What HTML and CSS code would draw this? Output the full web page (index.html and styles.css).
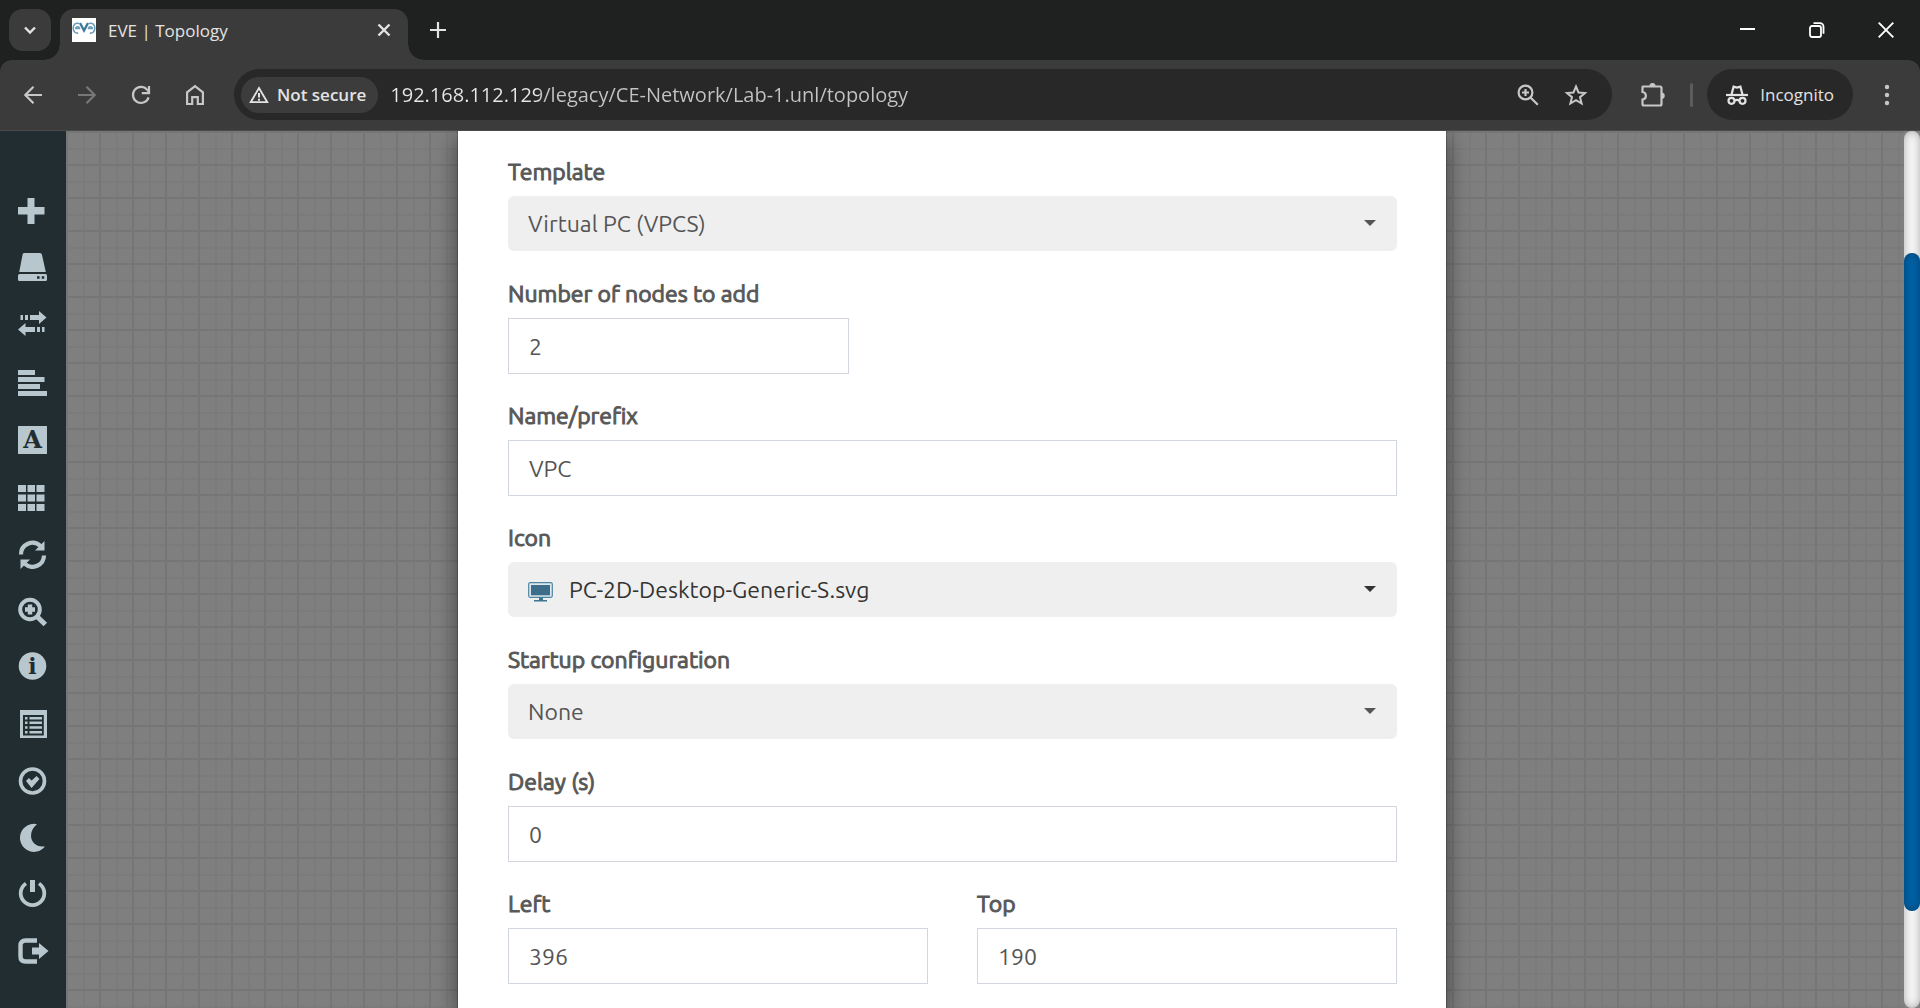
FILE: index.html
```html
<!DOCTYPE html>
<html lang="en">
<head>
<meta charset="utf-8">
<meta name="viewport" content="width=device-width, initial-scale=1">
<title>EVE | Topology</title>
<link rel="stylesheet" href="styles.css">
</head>
<body>
<div class="browser">
  <header class="tabstrip">
    <button class="tab-search" type="button" aria-label="Search tabs">
      <svg width="16" height="16" viewBox="0 0 16 16"><path d="M3 5.500l5 5 5-5" fill="none" stroke="currentColor" stroke-width="2.400"/></svg>
    </button>
    <div class="tab">
      <svg class="favicon" width="24" height="24" viewBox="0 0 24 24" aria-hidden="true">
        <rect width="24" height="24" fill="#fff"/>
        <g fill="none" stroke="#6a9db8">
          <path d="M7 5.500C3.500 4.500 1.200 6.500 1.200 10s2 5.500 5 5M3 10.500h4.500c0-2-3-2.500-4-.5" stroke-width="1.600"/>
          <path d="M17 5.500c3.500-1 5.800 1 5.800 4.500s-2 5.500-5 5M21 10.500h-4.500c0-2 3-2.500 4-.5" stroke-width="1.600"/>
          <path d="M8 5l4 7.500L16 5" stroke="#3f7a9c" stroke-width="2.400"/>
        </g>
      </svg>
      <span class="tab-title">EVE | Topology</span>
      <button class="bare tab-close" type="button" aria-label="Close tab">
        <svg width="14" height="14" viewBox="0 0 14 14"><path d="M1.500 1.500l11 11M12.500 1.500l-11 11" stroke="currentColor" stroke-width="2.400"/></svg>
      </button>
    </div>
    <button class="bare new-tab" type="button" aria-label="New tab">
      <svg width="16" height="16" viewBox="0 0 16 16"><path d="M8 0v16M0 8h16" stroke="currentColor" stroke-width="2.200"/></svg>
    </button>
    <div class="window-controls">
      <button class="bare" type="button" aria-label="Minimize"><svg width="16" height="16" viewBox="0 0 16 16"><path d="M0 7h15" stroke="#fff" stroke-width="2"/></svg></button>
      <button class="bare" type="button" aria-label="Restore"><svg width="16" height="16" viewBox="0 0 16 16"><g fill="none" stroke="#fff" stroke-width="1.800"><rect x="1" y="4" width="11" height="11" rx="2"/><path d="M4.500 1.200h6.500a3.500 3.500 0 0 1 3.500 3.500v7"/></g></svg></button>
      <button class="bare" type="button" aria-label="Close"><svg width="16" height="16" viewBox="0 0 16 16"><path d="M.7.700l14.600 14.600M15.300.7L.7 15.300" stroke="#fff" stroke-width="1.900"/></svg></button>
    </div>
  </header>

  <nav class="toolbar" aria-label="Browser toolbar">
    <div class="nav-buttons">
      <button class="bare" type="button" aria-label="Back"><svg width="20" height="20" viewBox="0 0 20 20"><path d="M19 10H3M10.500 1.800L2.300 10l8.200 8.200" fill="none" stroke="currentColor" stroke-width="2.200"/></svg></button>
      <button class="bare dim" type="button" aria-label="Forward" disabled><svg width="20" height="20" viewBox="0 0 20 20"><path d="M1 10h16M9.500 1.800l8.200 8.200-8.200 8.200" fill="none" stroke="currentColor" stroke-width="2.200"/></svg></button>
      <button class="bare" type="button" aria-label="Reload"><svg width="20" height="20" viewBox="0 0 20 20"><path d="M17.600 12.300A8 8 0 1 1 16 4.600L18 6.800" fill="none" stroke="currentColor" stroke-width="2.200"/><path d="M18 1v7.200h-7.200" fill="none" stroke="currentColor" stroke-width="2.200"/></svg></button>
      <button class="bare" type="button" aria-label="Home"><svg width="20" height="22" viewBox="0 0 20 22"><path d="M2.100 20V8.300L10 2.200l7.900 6.100V20h-5.100v-6.800H7.200V20z" fill="none" stroke="currentColor" stroke-width="2.200"/></svg></button>
    </div>
    <div class="omnibox">
      <button class="site-chip" type="button">
        <svg width="20" height="18" viewBox="0 0 20 18"><path d="M10 2L1.700 16.200h16.600z" fill="none" stroke="currentColor" stroke-width="1.800"/><path d="M10 7v4.500M10 12.800v2" stroke="currentColor" stroke-width="2"/></svg>
        <span>Not secure</span>
      </button>
      <input class="address" type="text" aria-label="Address" value="192.168.112.129/legacy/CE-Network/Lab-1.unl/topology" spellcheck="false">
      <button class="bare" type="button" aria-label="Zoom"><svg width="22" height="22" viewBox="0 0 22 22"><g fill="none" stroke="currentColor" stroke-width="2.200"><circle cx="8.500" cy="8.500" r="6.900"/><path d="M13.500 13.500l7.300 7.300M8.500 5v7M5 8.500h7"/></g></svg></button>
      <button class="bare" type="button" aria-label="Bookmark this tab"><svg width="24" height="24" viewBox="0 0 24 24"><path d="M12 3.500l2.500 6 6.500.5-5 4.200 1.600 6.300L12 17.100l-5.600 3.400L8 14.200 3 10l6.500-.5z" fill="none" stroke="currentColor" stroke-width="2"/></svg></button>
    </div>
    <button class="bare extensions" type="button" aria-label="Extensions"><svg width="26" height="26" viewBox="0 0 26 26"><path d="M3 4.500h17a1.500 1.500 0 0 1 1.500 1.500v16a1.500 1.500 0 0 1-1.500 1.500H4A1.500 1.500 0 0 1 2.500 22v-4.500c4.500-.5 4.500-7 0-7.500V5z" fill="none" stroke="currentColor" stroke-width="2.200"/><path d="M9.500 4a3 3 0 0 1 6 0zM22 10.500a3.300 3.300 0 0 1 0 6.500z" fill="currentColor"/></svg></button>
    <span class="divider"></span>
    <button class="incognito" type="button">
      <svg width="22" height="20" viewBox="0 0 22 20"><g fill="none" stroke="currentColor" stroke-width="2.200"><path d="M0 10h22"/><path d="M5.500 9.500L7.600 1.600 11 2.500l3.400-.9 2.100 7.900"/><circle cx="5.500" cy="15.800" r="3"/><circle cx="16.500" cy="15.800" r="3"/><path d="M8.500 15.500q2.500-1.300 5 0"/></g></svg>
      <span>Incognito</span>
    </button>
    <button class="bare menu" type="button" aria-label="Menu"><svg width="6" height="22" viewBox="0 0 6 22" fill="currentColor"><circle cx="3" cy="3" r="2.200"/><circle cx="3" cy="11" r="2.200"/><circle cx="3" cy="19" r="2.200"/></svg></button>
  </nav>

  <main class="page">
    <aside class="sidebar">
      <button class="bare" type="button" aria-label="Add an object"><svg viewBox="0 0 32 32"><path d="M10.500 3h7v9H27.500v7.500h-10V29h-7v-9.500H1V12h9.500z"/></svg></button>
      <button class="bare" type="button" aria-label="Nodes"><svg viewBox="0 0 32 32"><path d="M7 1h16q1.500 0 1.900 1.500L28.800 20H2.200L5.600 2.500Q5.900 1 7 1zM2.500 22h26q1.500 0 1.500 1.500v4q0 1.500-1.500 1.500h-26Q1 29 1 27.500v-4Q1 22 2.500 22zm17.500 2.200v2.600h2.600v-2.600zm4.700 0v2.600h2.600v-2.600z" fill-rule="evenodd"/></svg></button>
      <button class="bare" type="button" aria-label="Networks"><svg viewBox="0 0 32 32"><path d="M22 2l7.500 6.500L22 15v-4h-9V6h9zM8 6h3v5H8zM3.500 6H6v5H3.500zM8.500 14v4H18v5H8.500v4L1 20.500zM20 18h3v5h-3zM25 18h2.500v5H25z"/></svg></button>
      <button class="bare" type="button" aria-label="Startup configs"><svg viewBox="0 0 32 32"><path d="M1 4h17v5H1zM1 11h26.500v5H1zM1 18h22v5H1zM1 25h29v5H1z"/></svg></button>
      <button class="bare" type="button" aria-label="Text objects"><svg viewBox="0 0 32 32"><path d="M1 3h29v28H1z"/><text class="glyph" x="15.500" y="25" text-anchor="middle" font-size="24" font-weight="bold">A</text></svg></button>
      <button class="bare" type="button" aria-label="Configured objects"><svg viewBox="0 0 32 32"><path d="M1 5h8v7H1zM10.500 5H18v7h-7.500zM19.500 5h8v7h-8zM1 14.500h8v7H1zM10.500 14.500H18v7h-7.500zM19.500 14.500h8v7h-8zM1 24h8v7H1zM10.500 24H18v7h-7.500zM19.500 24h8v7h-8z"/></svg></button>
      <button class="bare" type="button" aria-label="Refresh topology"><svg viewBox="0 0 32 32"><g fill="none" stroke="currentColor" stroke-width="4.200"><path d="M4 17.500A11.500 11.500 0 0 1 23.500 9"/><path d="M27 18.500A11.500 11.500 0 0 1 8 27"/></g><path d="M27.500 4v9.500H18zM3.500 32v-9.500H13z"/></svg></button>
      <button class="bare" type="button" aria-label="Zoom"><svg viewBox="0 0 32 32"><g fill="none" stroke="currentColor"><circle cx="13" cy="15.500" r="9.800" stroke-width="4"/><path d="M20 22.500l8.300 8" stroke-width="5"/><path d="M13 10.500v10M8 15.500h10" stroke-width="4.400"/></g></svg></button>
      <button class="bare" type="button" aria-label="Status"><svg viewBox="0 0 32 32"><circle cx="15.500" cy="15" r="13.800"/><text class="glyph" x="15.500" y="23" text-anchor="middle" font-size="22" font-weight="bold">i</text></svg></button>
      <button class="bare" type="button" aria-label="Lab details"><svg viewBox="0 0 32 32"><path d="M3 2h27v28H3zm3 5v20.500h20.800V7z" fill-rule="evenodd"/><path d="M8 9h2.500v2.500H8zM12.500 9H25v2.500H12.500zM8 13.500h2.500V16H8zM12.500 13.500H25V16H12.500zM8 18.300h2.500v2.500H8zM12.500 18.300H25v2.500H12.500zM8 23h2.500v2.500H8zM12.500 23H25v2.500H12.500z"/></svg></button>
      <button class="bare" type="button" aria-label="Lock lab"><svg viewBox="0 0 32 32"><circle cx="15.500" cy="16" r="12" fill="none" stroke="currentColor" stroke-width="3.600"/><path d="M9 16l2.900-3 2.700 2.500 5-4.500 2.900 3-7.900 9z"/></svg></button>
      <button class="bare" type="button" aria-label="Dark mode"><svg viewBox="0 0 32 32"><path d="M20 2.200A14 14 0 1 0 28 24.500C12.500 26 10 9.500 20 2.200z"/></svg></button>
      <button class="bare" type="button" aria-label="Close lab"><svg viewBox="0 0 32 32"><path d="M9 4.500a11.800 11.800 0 1 0 13 0" fill="none" stroke="currentColor" stroke-width="3.800"/><path d="M13 1h5v12h-5z"/></svg></button>
      <button class="bare" type="button" aria-label="Logout"><svg viewBox="0 0 32 32"><path d="M20 4.500H8.500q-5 0-5 5v11q0 5 5 5H20" fill="none" stroke="currentColor" stroke-width="4.400"/><path d="M15 11.500h7V7l9.500 8-9.500 8v-4.500h-7z"/></svg></button>
    </aside>
    <div class="canvas"></div>
    <div class="scroll-track"><div class="scroll-thumb"></div></div>

    <div class="overlay">
      <form class="modal" aria-label="Add a new node">
        <div class="field">
          <label for="template">Template</label>
          <div class="select"><select id="template"><option>Virtual PC (VPCS)</option></select></div>
        </div>
        <div class="field count">
          <label for="count">Number of nodes to add</label>
          <input id="count" type="text" value="2">
        </div>
        <div class="field">
          <label for="name">Name/prefix</label>
          <input id="name" type="text" value="VPC">
        </div>
        <div class="field">
          <label for="icon">Icon</label>
          <div class="select with-icon">
            <svg class="device" width="25" height="20" viewBox="0 0 25 20" aria-hidden="true"><rect x=".7" y=".7" width="23.600" height="14.600" rx="1.500" fill="#dfe8ec" stroke="#4d86a1" stroke-width="1.200"/><rect x="3" y="3" width="19" height="10.300" fill="#3c6e8c"/><path d="M11 15.500h4V18h4v1.600H6V18h5z" fill="#3c7492"/></svg>
            <select id="icon"><option>PC-2D-Desktop-Generic-S.svg</option></select>
          </div>
        </div>
        <div class="field">
          <label for="startup">Startup configuration</label>
          <div class="select"><select id="startup"><option>None</option></select></div>
        </div>
        <div class="field">
          <label for="delay">Delay (s)</label>
          <input id="delay" type="text" value="0">
        </div>
        <div class="pair">
          <div class="field">
            <label for="left">Left</label>
            <input id="left" type="text" value="396">
          </div>
          <div class="field">
            <label for="top">Top</label>
            <input id="top" type="text" value="190">
          </div>
        </div>
      </form>
    </div>
  </main>
</div>
</body>
</html>
```
FILE: styles.css
```css
* { box-sizing: border-box; }

body {
  margin: 0;
  font-family: "Open Sans", "Noto Sans", sans-serif;
  background: #1f2120;
}

svg { display: block; flex: none; }

button, input, select { font: inherit; color: inherit; }

.bare {
  display: flex;
  align-items: center;
  justify-content: center;
  padding: 0;
  border: 0;
  background: none;
}

.browser {
  display: flex;
  flex-direction: column;
  height: 100vh;
  overflow: hidden;
}

/* Tab strip */
.tabstrip {
  display: flex;
  align-items: center;
  flex: none;
  height: 60px;
  padding-left: 9px;
  color: #e3e3e3;
}

.tab-search {
  display: flex;
  align-items: center;
  justify-content: center;
  width: 42px;
  height: 42px;
  padding: 0;
  border: 0;
  border-radius: 14px;
  background: #3b3b3b;
}

.tab {
  position: relative;
  display: flex;
  align-items: center;
  align-self: flex-end;
  width: 348px;
  height: 51px;
  margin-left: 9px;
  padding: 0 17px 9px 12px;
  border-radius: 14px 14px 0 0;
  background: #3b3b3b;
}

.tab::before,
.tab::after {
  content: "";
  position: absolute;
  bottom: 0;
  width: 15px;
  height: 15px;
}

.tab::before {
  right: 100%;
  background: radial-gradient(circle at 0 0, transparent 14px, #3b3b3b 15px);
}

.tab::after {
  left: 100%;
  background: radial-gradient(circle at 100% 0, transparent 14px, #3b3b3b 15px);
}

.tab-title {
  margin-left: 12px;
  padding-top: 2px;
  font-size: 17px;
  line-height: 24px;
}

.tab-close { margin-left: auto; }

.new-tab { margin-left: 22px; }

.window-controls {
  display: flex;
  height: 60px;
  margin-left: auto;
}

.window-controls .bare { width: 69px; }

/* Toolbar */
.toolbar {
  display: flex;
  align-items: center;
  flex: none;
  height: 71px;
  padding: 0 12px 1px;
  border-bottom: 1px solid #4a4a4a;
  border-radius: 12px 12px 0 0;
  background: #3b3b3b;
  color: #c7c7c7;
}

.nav-buttons {
  display: flex;
  gap: 12px;
}

.toolbar .bare {
  flex: none;
  width: 42px;
  height: 42px;
}

.toolbar .dim { color: #777; }

.omnibox {
  display: flex;
  align-items: center;
  flex: 1;
  min-width: 0;
  height: 51px;
  margin-left: 18px;
  padding: 0 15px 0 7px;
  border-radius: 26px;
  background: #282828;
}

.omnibox .bare + .bare { margin-left: 6px; }

.site-chip {
  display: flex;
  align-items: center;
  gap: 8px;
  flex: none;
  height: 36px;
  padding: 0 12px 0 8px;
  border: 0;
  border-radius: 18px;
  background: #3c3c3c;
  color: #e3e3e3;
  font-size: 17px;
  font-weight: 600;
}

.address {
  flex: 1;
  min-width: 0;
  margin-left: 12px;
  padding: 0;
  border: 0;
  outline: 0;
  background: linear-gradient(90deg, #e8e8e8 149px, #c4c4c4 149px);
  background-clip: text;
  color: transparent;
  font-size: 20px;
  line-height: 28px;
}

.extensions { margin-left: 20px; }

.divider {
  width: 3px;
  height: 24px;
  margin: 0 14px 0 16px;
  border-radius: 2px;
  background: #5c5c5c;
}

.incognito {
  display: flex;
  align-items: center;
  gap: 12px;
  flex: none;
  height: 51px;
  padding: 0 19px;
  border: 0;
  border-radius: 26px;
  background: #282828;
  color: #e3e3e3;
  font-size: 17px;
}

.menu { margin-left: 13px; }

/* Lab page */
.page {
  position: relative;
  display: flex;
  flex: 1;
  min-height: 0;
  overflow: hidden;
  background: #7f7f7f;
}

.sidebar {
  z-index: 1;
  display: flex;
  flex-direction: column;
  gap: 25px;
  flex: none;
  width: 66px;
  padding: 64px 17px 0;
  background: #222d32;
  color: #b8c7ce;
}

.sidebar svg {
  width: 32px;
  height: 32px;
  fill: currentColor;
}

.sidebar .glyph {
  fill: #222d32;
  font-family: "DejaVu Serif", serif;
}

.canvas {
  flex: 1;
  background-color: #7f7f7f;
  background-image:
    linear-gradient(90deg, #767676 2px, transparent 2px),
    linear-gradient(#767676 2px, transparent 2px),
    linear-gradient(90deg, transparent 17px, #7b7b7b 17px, #7b7b7b 19px, transparent 19px),
    linear-gradient(transparent 17px, #7b7b7b 17px, #7b7b7b 19px, transparent 19px);
  background-size: 33px 33px;
}

.scroll-track {
  flex: none;
  width: 16px;
  border-radius: 8px;
  background: #f5f5f5;
  box-shadow: inset 0 0 9px rgba(0, 0, 0, .3);
}

.scroll-thumb {
  height: 75%;
  margin-top: 122px;
  border-radius: 8px;
  background: #0061a4;
  box-shadow: inset 0 0 9px rgba(0, 0, 0, .3);
}

/* Node form */
.overlay {
  position: absolute;
  inset: 0 16px 0 0;
  display: flex;
  justify-content: center;
}

.modal {
  display: flex;
  flex-direction: column;
  gap: 26px;
  width: 988px;
  max-width: 85%;
  min-height: 100%;
  padding: 25px 49px 24px 50px;
  background: #fff;
  box-shadow: 0 0 0 1px rgba(0, 0, 0, .2), 0 7px 22px rgba(0, 0, 0, .5);
  color: #555;
  font-family: "Ubuntu", "Noto Sans", sans-serif;
  font-size: 23px;
}

.field {
  display: flex;
  flex-direction: column;
  gap: 8px;
  min-width: 0;
}

/* Regular letterforms thickened by a thin outline */
.field label {
  -webkit-text-stroke: 1px #5a5a5a;
  line-height: 32px;
}

.field input,
.field select {
  display: block;
  width: 100%;
  height: 56px;
  padding: 0 20px;
  border: 1px solid #d2d6de;
  border-radius: 0;
  outline: 0;
  background: #fff;
}

.count input { width: 341px; }

.select { position: relative; }

.field select {
  appearance: none;
  height: 55px;
  margin-bottom: 1px;
  border: 0;
  border-radius: 6px;
  background: #efefef;
}

.select::after {
  content: "";
  position: absolute;
  top: 24px;
  right: 21px;
  border: 6px solid transparent;
  border-top-color: #555;
  border-bottom: 0;
  pointer-events: none;
}

.with-icon { color: #333; }

.with-icon::after { border-top-color: #333; }

.field .with-icon select { padding-left: 61px; }

.device {
  position: absolute;
  top: 20px;
  left: 20px;
}

.pair {
  display: grid;
  grid-template-columns: 1fr 1fr;
  gap: 49px;
}
```
